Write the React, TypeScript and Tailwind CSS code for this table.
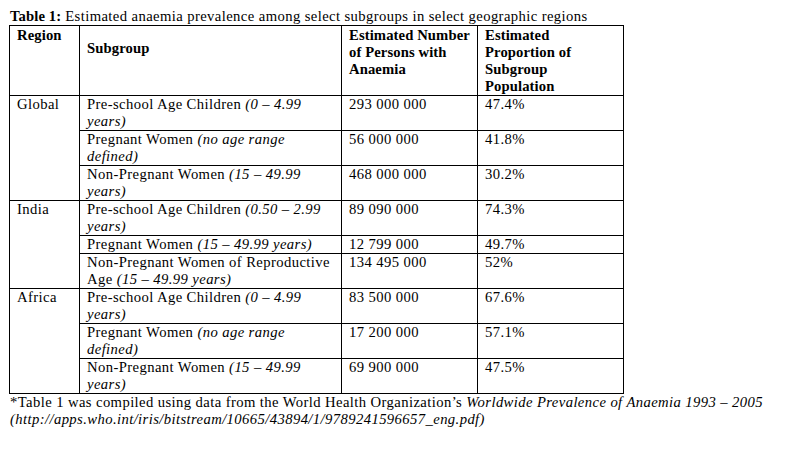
import React from "react"

type Row = {
  region?: string
  span?: number
  name: string
  note: string
  count: string
  pct: string
}

const rows: Row[] = [
  { region: "Global", span: 3, name: "Pre-school Age Children ", note: "(0 – 4.99|years)", count: "293 000 000", pct: "47.4%" },
  { name: "Pregnant Women ", note: "(no age range|defined)", count: "56 000 000", pct: "41.8%" },
  { name: "Non-Pregnant Women ", note: "(15 – 49.99|years)", count: "468 000 000", pct: "30.2%" },
  { region: "India", span: 3, name: "Pre-school Age Children ", note: "(0.50 – 2.99|years)", count: "89 090 000", pct: "74.3%" },
  { name: "Pregnant Women ", note: "(15 – 49.99 years)", count: "12 799 000", pct: "49.7%" },
  { name: "Non-Pregnant Women of Reproductive|Age ", note: "(15 – 49.99 years)", count: "134 495 000", pct: "52%" },
  { region: "Africa", span: 3, name: "Pre-school Age Children ", note: "(0 – 4.99|years)", count: "83 500 000", pct: "67.6%" },
  { name: "Pregnant Women ", note: "(no age range|defined)", count: "17 200 000", pct: "57.1%" },
  { name: "Non-Pregnant Women ", note: "(15 – 49.99|years)", count: "69 900 000", pct: "47.5%" },
]

// splits "a|b" into lines with <br />
function lines(s: string) {
  const parts = s.split("|")
  return parts.map((p, i) => (
    <React.Fragment key={i}>
      {p}
      {i < parts.length - 1 && <br />}
    </React.Fragment>
  ))
}

const cell = "border border-black px-[7px] py-0 align-top text-left whitespace-nowrap"
const head = `${cell} font-bold tracking-[0.1px]`

export default function App() {
  return (
    <div
      className="min-h-[450px] w-[795px] bg-white text-black text-[14.67px] leading-[17px] tracking-[0.4px]"
      style={{ fontFamily: '"Liberation Serif", "Times New Roman", serif' }}
    >
      <div className="pl-[10px] pt-[8px]">
        <span className="font-bold tracking-[0.1px]">Table 1:</span> Estimated anaemia prevalence among select subgroups in select geographic regions
      </div>
      <table className="ml-[9px] border-collapse table-fixed w-[614px]">
        <colgroup>
          <col className="w-[70px]" />
          <col className="w-[262px]" />
          <col className="w-[136px]" />
          <col className="w-[146px]" />
        </colgroup>
        <thead>
          <tr>
            <th className={`${head} pt-px`}>Region</th>
            <th className={`${head} pt-[14px]`}>Subgroup</th>
            <th className={`${head} pt-px`}>
              Estimated Number
              <br />
              of Persons with
              <br />
              Anaemia
            </th>
            <th className={`${head} pt-px`}>
              Estimated
              <br />
              Proportion of
              <br />
              Subgroup
              <br />
              Population
            </th>
          </tr>
        </thead>
        <tbody>
          {rows.map((r, i) => (
            <tr key={i}>
              {r.region && (
                <td rowSpan={r.span} className={cell}>
                  {r.region}
                </td>
              )}
              <td className={cell}>
                {lines(r.name)}
                <i>{lines(r.note)}</i>
              </td>
              <td className={cell}>{r.count}</td>
              <td className={cell}>{r.pct}</td>
            </tr>
          ))}
        </tbody>
      </table>
      <div className="pl-[10px]">
        *Table 1 was compiled using data from the World Health Organization’s{" "}
        <i>Worldwide Prevalence of Anaemia 1993 – 2005</i>
        <br />
        <i>(http://apps.who.int/iris/bitstream/10665/43894/1/9789241596657_eng.pdf)</i>
      </div>
    </div>
  )
}
